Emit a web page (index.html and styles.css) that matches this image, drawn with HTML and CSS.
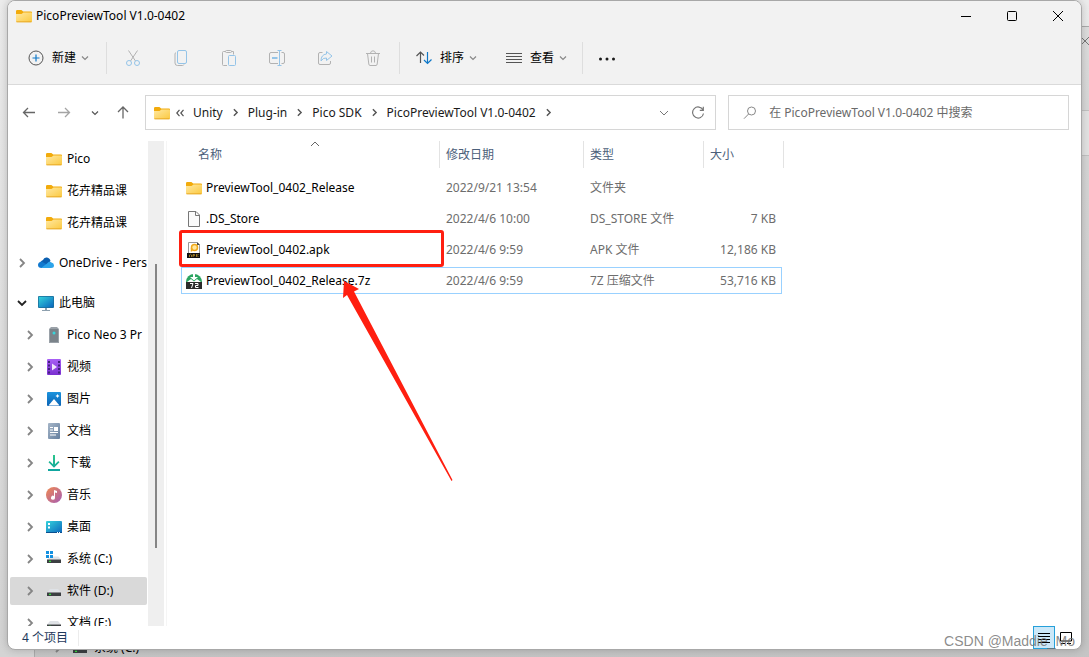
FILE: index.html
```html
<!DOCTYPE html>
<html lang="zh-CN">
<head>
<meta charset="utf-8">
<title>PicoPreviewTool V1.0-0402</title>
<link rel="stylesheet" href="styles.css">
</head>
<body>
<svg class="defs" width="0" height="0" aria-hidden="true">
  <defs>
    <linearGradient id="gFolder" x1="0" y1="0" x2="1" y2="1"><stop offset="0" stop-color="#ffe8a2"/><stop offset="1" stop-color="#fbc93f"/></linearGradient>
    <linearGradient id="gPc" x1="0" y1="0" x2="1" y2="1"><stop offset="0" stop-color="#35d3dc"/><stop offset="1" stop-color="#0b66bd"/></linearGradient>
    <linearGradient id="gVideo" x1="0" y1="0" x2="0" y2="1"><stop offset="0" stop-color="#a860f5"/><stop offset="1" stop-color="#7a2fd0"/></linearGradient>
    <linearGradient id="gPic" x1="0" y1="0" x2="0" y2="1"><stop offset="0" stop-color="#1b93dd"/><stop offset="1" stop-color="#0a63b5"/></linearGradient>
    <linearGradient id="gDoc" x1="0" y1="0" x2="1" y2="1"><stop offset="0" stop-color="#a6b6c8"/><stop offset="1" stop-color="#647f9f"/></linearGradient>
    <linearGradient id="gMusic" x1="0" y1="0" x2="1" y2="1"><stop offset="0" stop-color="#f08a50"/><stop offset="1" stop-color="#a55cb5"/></linearGradient>
    <linearGradient id="gDown" x1="0" y1="0" x2="0" y2="1"><stop offset="0" stop-color="#2cc58c"/><stop offset="1" stop-color="#0fa5a0"/></linearGradient>
    <symbol id="folder" viewBox="0 0 16 16"><path d="M0 3.200Q0 2 1.200 2H5.400L7.200 3.600H15Q16 3.600 16 4.600V8H0Z" fill="#f2ab0c"/><path d="M0 6Q3 6.200 5.500 6L7.500 4.600H15Q16 4.600 16 5.400V13Q16 14.200 14.800 14.200H1.200Q0 14.200 0 13Z" fill="url(#gFolder)"/><path d="M0.400 13.800H15.600" stroke="#e3a01c" stroke-width=".8"/></symbol>
    <symbol id="chev" viewBox="0 0 16 16"><path d="M6 4L10 8L6 12" fill="none" stroke="currentColor" stroke-width="1.800"/></symbol>
    <symbol id="chevDown" viewBox="0 0 16 16"><path d="M4 6L8 10L12 6" fill="none" stroke="currentColor" stroke-width="1.800"/></symbol>
    <symbol id="chevSmall" viewBox="0 0 8 8"><path d="M1 2.500L4 5.500L7 2.500" fill="none" stroke="currentColor" stroke-width="1.200"/></symbol>
    <symbol id="drive" viewBox="0 0 16 16"><path d="M4 6H12L15 9.500H1Z" fill="#dfe2e6"/><path d="M1 9.500H15V13H1Z" fill="#3c3f42"/><path d="M3 10.700H5V12H3Z" fill="#34e03c"/></symbol>
  </defs>
</svg>

<div class="back-window" aria-hidden="true">
  <svg class="back-close" width="10" height="10" viewBox="0 0 10 10"><path d="M.5 .5L9.500 9.500M9.500 .5L.5 9.500" stroke="#777" fill="none"/></svg>
  <div class="back-bar"></div>
  <div class="back-item"><svg class="i16 grey"><use href="#chev"/></svg><svg class="i16"><use href="#drive"/></svg><span>系统 (C:)</span></div>
</div>

<div class="window">
  <header class="titlebar">
    <svg class="i16"><use href="#folder"/></svg>
    <h1 class="title">PicoPreviewTool V1.0-0402</h1>
    <button class="winbtn" aria-label="最小化"><svg width="12" height="12" viewBox="0 0 12 12"><path d="M1 6.500H11" stroke="#000"/></svg></button>
    <button class="winbtn" aria-label="最大化"><svg width="12" height="12" viewBox="0 0 12 12"><rect x="1.500" y="1.500" width="9" height="9" rx="1" fill="none" stroke="#000"/></svg></button>
    <button class="winbtn" aria-label="关闭"><svg width="12" height="12" viewBox="0 0 12 12"><path d="M1 1L11 11M11 1L1 11" stroke="#000" fill="none"/></svg></button>
  </header>

  <div class="toolbar">
    <button class="tool new"><svg class="i16" viewBox="0 0 16 16" fill="none"><circle cx="8" cy="8" r="7" stroke="#555"/><path d="M8 4.500V11.500M4.500 8H11.500" stroke="#0f78c8" stroke-width="1.200"/></svg><span>新建</span><svg class="i8"><use href="#chevSmall"/></svg></button>
    <i class="sep"></i>
    <button class="icon-tool" aria-label="剪切"><svg class="i16" viewBox="0 0 16 16" fill="none"><path d="M3.500 .5L10.500 11M12.500 .5L5.500 11" stroke="#b2b2b2"/><circle cx="4" cy="13" r="2.500" stroke="#94c4e8"/><circle cx="12" cy="13" r="2.500" stroke="#94c4e8"/></svg></button>
    <button class="icon-tool" aria-label="复制"><svg class="i16" viewBox="0 0 16 16" fill="none"><path d="M3 2.500Q2 3 2 4V13Q2 15.500 4.500 15.500H9.500Q10.500 15.500 11 14.500" stroke="#b2b2b2"/><rect x="4.500" y=".5" width="9" height="13" rx="1.500" stroke="#94c4e8"/></svg></button>
    <button class="icon-tool" aria-label="粘贴"><svg class="i16" viewBox="0 0 16 16" fill="none"><path d="M4.500 1.500H2.500Q1.500 1.500 1.500 2.500V14.500Q1.500 15.500 2.500 15.500H6M10.500 1.500H12.500V4.500" stroke="#b2b2b2"/><rect x="4.500" y=".5" width="6" height="2" rx="1" stroke="#b2b2b2"/><rect x="7.500" y="5.500" width="7" height="10" rx="1" stroke="#94c4e8"/></svg></button>
    <button class="icon-tool" aria-label="重命名"><svg class="i16" viewBox="0 0 16 16" fill="none"><path d="M9 2.500H2Q.5 2.500 .5 4V12Q.5 13.500 2 13.500H9M12.500 2.500H14Q15.500 2.500 15.500 4V12Q15.500 13.500 14 13.500H12.500" stroke="#b2b2b2"/><path d="M10.500 1V15M8.500 .5H12.500M8.500 15.500H12.500" stroke="#94c4e8"/><path d="M3 8H8.500" stroke="#94c4e8" stroke-width="2"/></svg></button>
    <button class="icon-tool" aria-label="共享"><svg class="i16" viewBox="0 0 16 16" fill="none"><path d="M5.500 2.500H3Q1.500 2.500 1.500 4V13Q1.500 14.500 3 14.500H12Q13.500 14.500 13.500 13V11" stroke="#b2b2b2"/><path d="M9.500 1.500L15 6L9.500 10.500V8Q6 7.500 4 11Q4 4.500 9.500 4Z" stroke="#94c4e8" stroke-linejoin="round"/></svg></button>
    <button class="icon-tool" aria-label="删除"><svg class="i16" viewBox="0 0 16 16" fill="none" stroke="#b2b2b2"><path d="M1 3.500H15M2.500 3.500L3.800 14Q4 15.500 5 15.500H11Q12 15.500 12.200 14L13.500 3.500M5.500 3Q6 .8 8 .8T10.500 3M6.500 6.500V12.500M9.500 6.500V12.500"/></svg></button>
    <i class="sep"></i>
    <button class="tool"><svg class="i16" viewBox="0 0 16 16" fill="none"><path d="M4.500 13V2M.5 6L4.500 2L8 5.500" stroke="#555" stroke-width="1.200"/><path d="M11.500 2V13.500M8 10L11.500 13.500L15.500 9.500" stroke="#0f78c8" stroke-width="1.200"/></svg><span>排序</span><svg class="i8"><use href="#chevSmall"/></svg></button>
    <button class="tool"><svg class="i16" viewBox="0 0 16 16"><path d="M0 3.500H16M0 6.500H16M0 9.500H16M0 12.500H16" stroke="#555"/></svg><span>查看</span><svg class="i8"><use href="#chevSmall"/></svg></button>
    <i class="sep last"></i>
    <button class="icon-tool" aria-label="更多"><svg class="i16" viewBox="0 0 16 16" fill="#1a1a1a"><circle cx="1.500" cy="9" r="1.500"/><circle cx="8" cy="9" r="1.500"/><circle cx="14.500" cy="9" r="1.500"/></svg></button>
  </div>

  <nav class="navbar" aria-label="导航">
    <button class="nav" aria-label="后退"><svg class="i16" viewBox="0 0 16 16" fill="none" stroke="#666" stroke-width="1.300"><path d="M14 7.500H2.500M7 3L2.500 7.500L7 12"/></svg></button>
    <button class="nav" aria-label="前进"><svg class="i16" viewBox="0 0 16 16" fill="none" stroke="#a4a4a4" stroke-width="1.300"><path d="M2 7.500H13.500M9 3L13.500 7.500L9 12"/></svg></button>
    <button class="nav narrow" aria-label="最近浏览的位置"><svg class="i8 dark"><use href="#chevSmall"/></svg></button>
    <button class="nav" aria-label="上移"><svg class="i16" viewBox="0 0 16 16" fill="none" stroke="#666" stroke-width="1.300"><path d="M8 13.500V2M3 7L8 2L13 7"/></svg></button>
    <div class="address">
      <svg class="i16"><use href="#folder"/></svg>
      <span class="more"><svg width="8" height="8" viewBox="0 0 8 8" fill="none" stroke="#555" stroke-width="1.200"><path d="M3.500 .8L.8 4L3.500 7.200M7.500 .8L4.800 4L7.500 7.200"/></svg></span>
      <a href="#">Unity</a><svg class="crumb"><use href="#chev"/></svg>
      <a href="#">Plug-in</a><svg class="crumb"><use href="#chev"/></svg>
      <a href="#">Pico SDK</a><svg class="crumb"><use href="#chev"/></svg>
      <a href="#">PicoPreviewTool V1.0-0402</a><svg class="crumb"><use href="#chev"/></svg>
      <button class="addr-btn push" aria-label="以前的位置"><svg width="10" height="10" viewBox="0 0 10 10" fill="none" stroke="#777"><path d="M1 3L5 7L9 3"/></svg></button>
      <button class="addr-btn" aria-label="刷新"><svg width="14" height="14" viewBox="0 0 14 14" fill="none" stroke="#777" stroke-width="1.200"><path d="M12 4A5.500 5.500 0 1 0 12.500 7.500M12.300 .8V4.300H8.800"/></svg></button>
    </div>
    <label class="search">
      <svg width="14" height="14" viewBox="0 0 14 14" fill="none" stroke="#888"><circle cx="8.500" cy="5" r="4"/><path d="M5.600 8L1 12.700"/></svg>
      <input type="text" placeholder="在 PicoPreviewTool V1.0-0402 中搜索" aria-label="搜索">
    </label>
  </nav>

  <div class="content">
    <aside class="sidebar">
      <ul class="tree">
        <li class="node quick"><svg class="i16"><use href="#folder"/></svg>Pico</li>
        <li class="node quick"><svg class="i16"><use href="#folder"/></svg>花卉精品课</li>
        <li class="node quick"><svg class="i16"><use href="#folder"/></svg>花卉精品课</li>
        <li class="node root"><svg class="i16 grey"><use href="#chev"/></svg><svg class="i16" viewBox="0 0 16 16"><path d="M2 10Q2 6 5 5Q6 2 9 2.500Q12 3 12.500 6L8 11Z" fill="#0b5fb0"/><path d="M3.500 13Q0 13 0 10Q0 7 3.500 6.500L9 9.500L7 13Z" fill="#1179cf"/><path d="M3 13L9 8.500Q11 5.500 13.500 7.500Q16 8 16 10.500Q16 13 13 13Z" fill="#2ca3ea"/></svg>OneDrive - Pers</li>
        <li class="node root open"><svg class="i16 black"><use href="#chevDown"/></svg><svg class="i16" viewBox="0 0 16 16"><rect x="0" y="1" width="16" height="12" rx="1" fill="#1b6f9c"/><rect x=".8" y="1.800" width="14.400" height="10.400" fill="url(#gPc)"/><path d="M7 13H9V15H12V16H4V15H7Z" fill="#8ea0ae"/></svg>此电脑</li>
        <li class="node"><svg class="i16 grey"><use href="#chev"/></svg><svg class="i16" viewBox="0 0 16 16"><path d="M3 2L5 0H11L13 2V16H3Z" fill="#9aa1a8"/><path d="M4 2H12V15H4Z" fill="#7b838a"/><circle cx="8" cy="6" r="1.500" fill="#39d5dc"/></svg>Pico Neo 3 Pr</li>
        <li class="node"><svg class="i16 grey"><use href="#chev"/></svg><svg class="i16" viewBox="0 0 16 16"><rect x="1" width="14" height="16" rx="1" fill="url(#gVideo)"/><path d="M2 2H4V4H2ZM2 5.500H4V7.500H2ZM2 9H4V11H2ZM2 12.500H4V14.500H2ZM12 2H14V4H12ZM12 5.500H14V7.500H12ZM12 9H14V11H12ZM12 12.500H14V14.500H12Z" fill="#43217c"/><path d="M6 4.500L11 8L6 11.500Z" fill="#f0e6fb"/></svg>视频</li>
        <li class="node"><svg class="i16 grey"><use href="#chev"/></svg><svg class="i16" viewBox="0 0 16 16"><rect x="1" y="1" width="14" height="14" rx="1" fill="url(#gPic)"/><path d="M2.500 14.500L8 8L13.500 14.500Z" fill="#fff"/><path d="M11.500 3L12.200 4.300L13.500 5L12.200 5.700L11.500 7L10.800 5.700L9.500 5L10.800 4.300Z" fill="#fff"/></svg>图片</li>
        <li class="node"><svg class="i16 grey"><use href="#chev"/></svg><svg class="i16" viewBox="0 0 16 16"><rect x="2" width="12" height="16" rx="1" fill="url(#gDoc)"/><path d="M4 4.500H7M4 7H7M4 9.500H12M4 12H10" stroke="#fff" stroke-width="1.200"/><path d="M8 4H12V8H8Z" fill="#fff"/></svg>文档</li>
        <li class="node"><svg class="i16 grey"><use href="#chev"/></svg><svg class="i16" viewBox="0 0 16 16"><path d="M7 0H9V9.300L12.300 6L13.500 7.300L8 12.800L2.500 7.300L3.700 6L7 9.300ZM2 14H14V16H2Z" fill="url(#gDown)"/></svg>下载</li>
        <li class="node"><svg class="i16 grey"><use href="#chev"/></svg><svg class="i16" viewBox="0 0 16 16"><circle cx="8" cy="8" r="8" fill="url(#gMusic)"/><path d="M8 3L11 4V6L9 5.500V10.500A2 2 0 1 1 8 9Z" fill="#fff"/></svg>音乐</li>
        <li class="node"><svg class="i16 grey"><use href="#chev"/></svg><svg class="i16" viewBox="0 0 16 16"><rect y="2" width="16" height="12" rx="1" fill="url(#gPc)"/><path d="M2 4H4V6H2ZM2 7.500H4V9.500H2Z" fill="#fff"/><path d="M0 13H16V14H0Z" fill="#0a4f8f"/><path d="M11 13H12V14H11ZM13 13H14V14H13Z" fill="#fff"/></svg>桌面</li>
        <li class="node"><svg class="i16 grey"><use href="#chev"/></svg><svg class="i16" viewBox="0 0 16 16"><path d="M5 5.500H12.500L15 8.500H1Z" fill="#dfe2e6"/><path d="M1 8.500H15V12H1Z" fill="#3c3f42"/><path d="M3 9.700H5V11H3Z" fill="#34e03c"/><path d="M0 0H3V3H0ZM4 0H7V3H4ZM0 4H3V7H0ZM4 4H7V7H4Z" fill="#1390e0"/></svg>系统 (C:)</li>
        <li class="node selected"><svg class="i16 grey"><use href="#chev"/></svg><svg class="i16"><use href="#drive"/></svg>软件 (D:)</li>
        <li class="node"><svg class="i16 grey"><use href="#chev"/></svg><svg class="i16"><use href="#drive"/></svg>文档 (E:)</li>
      </ul>
      <div class="scrollbar"><div class="thumb"></div></div>
    </aside>

    <main class="files">
      <svg class="sorted" width="10" height="6" viewBox="0 0 10 6" fill="none" stroke="#666"><path d="M1 5L5 1L9 5"/></svg>
      <table>
        <colgroup><col class="c-name"><col class="c-date"><col class="c-type"><col class="c-size"></colgroup>
        <thead><tr><th><div>名称</div></th><th><div>修改日期</div></th><th><div>类型</div></th><th><div>大小</div></th></tr></thead>
        <tbody>
          <tr><td><div class="name"><svg class="i16"><use href="#folder"/></svg>PreviewTool_0402_Release</div></td><td>2022/9/21 13:54</td><td>文件夹</td><td></td></tr>
          <tr><td><div class="name"><svg class="i16" viewBox="0 0 16 16"><path d="M2.500 .5H10L13.500 4V15.500H2.500Z" fill="#fafafa" stroke="#777"/><path d="M9.500 .5V4.500H13.500" fill="none" stroke="#777"/></svg>.DS_Store</div></td><td>2022/4/6 10:00</td><td>DS_STORE 文件</td><td>7 KB</td></tr>
          <tr><td><div class="name"><svg class="i16" viewBox="0 0 16 16"><path d="M2.500 .5H11L13.500 3V12H2.500Z" fill="#fff" stroke="#999"/><path d="M11 0L14 3H11Z" fill="#444"/><circle cx="8.500" cy="5.500" r="3" fill="#ffe7a0" stroke="#f0a818" stroke-width="1.500"/><path d="M5.500 6V9.500" stroke="#f0a818" stroke-width="1.500"/><path d="M1 11H14V16H1Z" fill="#111"/><path d="M3.500 15V13L4.500 12.200L5.500 13V15M7 15V12.500H8.500V13.700H7M10.500 12V15M12.500 12L11 13.500L12.500 15" stroke="#c89b28" stroke-width=".7" fill="none"/></svg>PreviewTool_0402.apk</div></td><td>2022/4/6 9:59</td><td>APK 文件</td><td>12,186 KB</td></tr>
          <tr class="focused"><td><div class="name"><svg class="i16" viewBox="0 0 16 16"><path d="M0 9A8 8 0 1 1 16 9Z" fill="#2ba560"/><path d="M7 1H9V4H12L8 7.500L4 4H7Z" fill="#fff"/><path d="M1 9L5 6L8 8.500L11 6L15 9Z" fill="#fff"/><path d="M0 9H16V16H0Z" fill="#2b2b2b"/><path d="M4 10.500H7L5.500 15M9 10.500H12V12.500H9.500V14.500H12.500" stroke="#fff" fill="none"/></svg>PreviewTool_0402_Release.7z</div></td><td>2022/4/6 9:59</td><td>7Z 压缩文件</td><td>53,716 KB</td></tr>
        </tbody>
      </table>
      <div class="mark-box"></div>
      <svg class="mark-arrow" width="112" height="202" viewBox="0 0 112 202"><path d="M2 0L17 8L12 10.500L110.500 199L109.500 200L5 14L1 17Z" fill="#ff1f10"/></svg>
    </main>
  </div>

  <footer class="status">
    <span class="count">4 个项目</span>
    <button class="view on" aria-label="详细信息"><svg width="12" height="12" viewBox="0 0 12 12"><path d="M0 1.500H12M0 4.500H12M0 7.500H12M0 10.500H12" stroke="#000"/></svg></button>
    <button class="view" aria-label="大图标"><svg width="12" height="12" viewBox="0 0 12 12"><path d="M.5 9V.5H11.500V9Z" fill="none" stroke="#000"/><path d="M1 11.500H5M7 11.500H11" stroke="#000"/></svg></button>
  </footer>
</div>
<div class="watermark">CSDN @Maddie_Mo</div>
</body>
</html>
```

FILE: styles.css
```css
* { box-sizing: border-box; }
body {
  margin: 0;
  height: 100vh;
  padding: 0 7px 7px;
  position: relative;
  overflow: hidden;
  background: linear-gradient(#ececec, #d4d4d4);
  font: 12px/16px "Noto Sans", "Noto Sans CJK SC", sans-serif;
  color: #000;
}
.defs { position: absolute; }
svg { display: block; flex: none; }
button { border: 0; padding: 0; background: none; font: inherit; color: inherit; display: flex; align-items: center; justify-content: center; }
.i16 { width: 16px; height: 16px; }
.i8 { width: 8px; height: 8px; color: #888; }
.grey { color: #858585; }
.black { color: #222; }
.dark { color: #555; }

/* Second window, partly visible behind the main one */
.back-window {
  position: absolute;
  inset: 26px -20px -20px 34px;
  border: 1px solid #aaa;
  background: linear-gradient(#dedede, #d8d8d8 80px, #c4c4c4);
}
.back-close { position: absolute; right: 18px; top: 9px; }
.back-bar { position: absolute; right: 0; top: 83px; width: 30px; height: 46px; border: 1px solid #c2c2c2; background: #e3e3e3; }
.back-item { position: absolute; left: 15px; bottom: 20px; display: flex; align-items: center; gap: 6px; }

.window {
  position: relative;
  height: 100%;
  display: flex;
  flex-direction: column;
  overflow: hidden;
  border: 1px solid #a8a8a8;
  border-radius: 8px;
  background: #fff;
  box-shadow: 0 0 8px rgba(0, 0, 0, .2);
}
.titlebar { display: flex; align-items: center; height: 30px; padding-left: 8px; background: #f2f2f2; flex: none; }
.title { margin: 0; padding-left: 4px; flex: 1; font-size: 12px; font-weight: 400; }
.winbtn { width: 46px; height: 28px; }

.toolbar { display: flex; align-items: center; height: 54px; flex: none; padding: 0 12px; background: #f2f2f2; border-bottom: 1px solid #dadada; }
.tool { gap: 5px; width: 90px; height: 36px; padding-left: 14px; justify-content: flex-start; }
.tool span { margin-left: 3px; }
.tool.new { width: 84px; padding-left: 8px; }
.icon-tool { width: 48px; height: 36px; }
.sep { width: 1px; height: 32px; margin: 0 2px; background: #dedede; }
.sep.last { margin: 0; }

.navbar { display: flex; align-items: center; flex: none; padding: 10px 12px 11px 5px; }
.nav { width: 32px; height: 32px; margin-right: 3px; }
.nav.narrow { width: 24px; margin-right: 0; }
.nav:nth-child(4) { margin-right: 6px; }
.address, .search { display: flex; align-items: center; height: 35px; border: 1px solid #d6d6d6; min-width: 0; }
.address { flex: 19; padding-left: 8px; white-space: nowrap; }
.address a { color: #1a1a1a; text-decoration: none; }
.more { padding: 0 9px 0 6px; }
.crumb { width: 13px; height: 13px; margin: 0 6px; color: #555; }
.addr-btn { width: 34px; height: 32px; }
.push { margin-left: auto; }
.search { flex: 11; margin-left: 12px; padding-left: 14px; gap: 12px; }
.search input { flex: 1; min-width: 0; border: 0; outline: 0; padding: 0; background: none; font: inherit; }
.search input::placeholder { color: #6a6a6a; opacity: 1; }

.content { flex: 1; min-height: 0; display: flex; }
.sidebar { width: 159px; flex: none; display: flex; border-right: 1px solid #f5f5f5; overflow: hidden; }
.tree { list-style: none; margin: 0; padding: 4px 1px 0 2px; width: 140px; flex: none; overflow: hidden; }
.node { display: flex; align-items: center; gap: 5px; height: 28px; margin-bottom: 4px; padding-left: 12px; white-space: nowrap; overflow: hidden; border-radius: 2px; }
.node > .i16:first-child { margin-right: 3px; }
.node.quick { padding-left: 36px; }
.node.quick > .i16:first-child { margin-right: 0; }
.node.root { margin: 12px 0; padding-left: 4px; }
.node.root.open { margin-bottom: 4px; }
.selected { background: #d9d9d9; }
.scrollbar { width: 16px; background: #efefef; padding: 123px 0 78px 7px; }
.thumb { width: 2px; height: 100%; background: #858585; }

.files { flex: 1; position: relative; padding-left: 12px; min-width: 0; }
.sorted { position: absolute; left: 143px; top: 0; }
table { table-layout: fixed; width: 605px; border-collapse: collapse; color: #6d6d6d; }
.c-name { width: 261px; }
.c-date { width: 144px; }
.c-type { width: 120px; }
.c-size { width: 80px; }
th { padding: 0 0 4px; font-weight: 400; text-align: left; color: #4c607a; }
th div { height: 27px; padding: 6px 6px 5px; border-right: 1px solid #e3e3e3; }
th:first-child div { padding-left: 19px; }
td { height: 31px; padding: 0 6px; white-space: nowrap; }
td:last-child { padding-right: 8px; text-align: right; }
.name { display: flex; align-items: center; gap: 4px; color: #000; }
td:first-child { padding-left: 7px; }
.focused { outline: 1px solid #99d1ff; outline-offset: -3px; }
.mark-box { position: absolute; left: 12px; top: 89px; width: 265px; height: 37px; border: 3px solid #ff1f10; border-radius: 3px; }
.mark-arrow { position: absolute; left: 175px; top: 140px; }

.status { flex: none; display: flex; align-items: center; height: 23px; padding: 0 4px 0 14px; color: #1e395b; }
.count { margin-right: auto; padding-right: 10px; border-right: 1px solid #ececec; }
.view { width: 22px; height: 23px; }
.view.on { border: 1px solid #26a0da; background: #cce8f8; }
.watermark { position: absolute; right: 14px; bottom: 6px; font: 14px/20px "Liberation Sans", sans-serif; color: rgba(110, 110, 110, .8); }
```
